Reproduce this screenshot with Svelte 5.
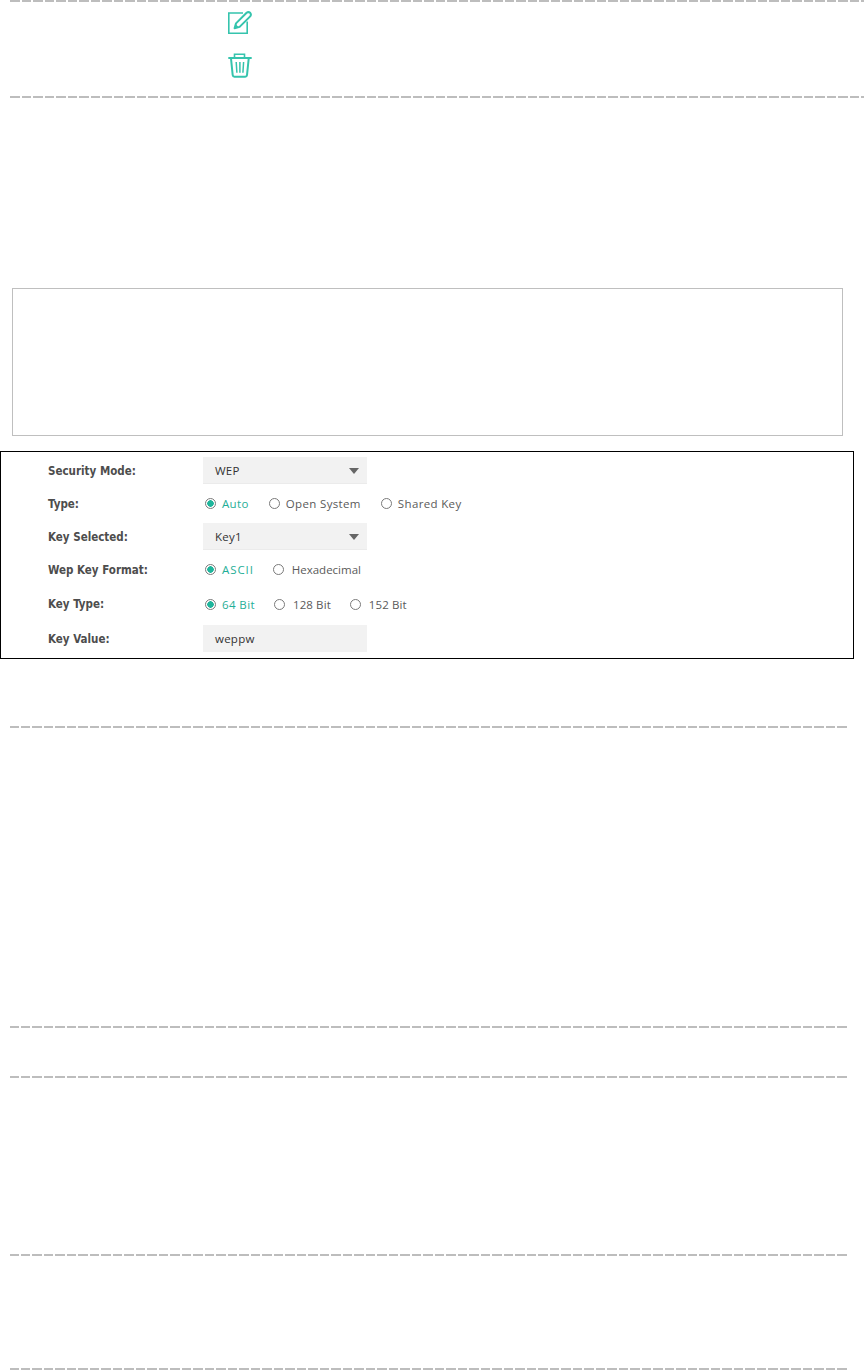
<script>
	const typeOptions = [
		{ label: 'Auto', checked: true },
		{ label: 'Open System' },
		{ label: 'Shared Key' }
	];
	const formatOptions = [{ label: 'ASCII', checked: true }, { label: 'Hexadecimal' }];
	const bitOptions = [{ label: '64 Bit', checked: true }, { label: '128 Bit' }, { label: '152 Bit' }];
</script>

{#snippet radios(options, gap, cls = '')}
	<div class="radios {cls}" style:gap="{gap}px">
		{#each options as opt}
			<span class="radio" class:on={opt.checked}><i></i>{opt.label}</span>
		{/each}
	</div>
{/snippet}

{#snippet select(value)}
	<div class="field select">{value}<b></b></div>
{/snippet}

<div class="page">
	<div class="rule wide first"></div>
	<div class="icons">
		<svg width="24" height="24" viewBox="0 0 24 24" fill="none" stroke="#35c4ad">
			<path d="M19.2 10.5V22.2H.8V2H15" stroke-width="1.6" />
			<path d="M6.6 17.2 8 12.4 18.6 1.8Q20.4 .4 22.2 1.8 23.6 3.6 22.2 5.4L11.6 15.9Z" stroke-width="2" stroke-linejoin="round" />
			<path d="M6.6 17.2 7.8 13.2 10.8 16.2Z" fill="#35c4ad" stroke="none" />
		</svg>
		<svg width="24" height="25" viewBox="0 0 24 25" fill="none" stroke="#35c4ad" stroke-width="2">
			<path d="M0.3 5H23.7" />
			<path d="M6.5 4.5V1.2H16.5V4.5" stroke-width="1.6" />
			<path d="M3 5.5 4.7 22.2Q4.9 23.8 6.4 23.8H17.2Q18.8 23.8 19 22.2L20.7 5.5" />
			<path d="M8.2 9 8.9 19.8M11.9 9V19.8M15.6 9 14.9 19.8" stroke-width="1.5" />
		</svg>
	</div>
	<div class="rule wide second"></div>

	<div class="note"></div>

	<div class="panel">
		<div class="row">
			<span class="label">Security Mode:</span>
			{@render select('WEP')}
		</div>
		<div class="row tall">
			<span class="label">Type:</span>
			{@render radios(typeOptions, 20)}
		</div>
		<div class="row">
			<span class="label">Key Selected:</span>
			{@render select('Key1')}
		</div>
		<div class="row tall">
			<span class="label">Wep Key Format:</span>
			{@render radios(formatOptions, 19, 'format')}
		</div>
		<div class="row mid">
			<span class="label">Key Type:</span>
			{@render radios(bitOptions, 19, 'bits')}
		</div>
		<div class="row">
			<span class="label">Key Value:</span>
			<div class="field">weppw</div>
		</div>
	</div>

	<div class="rule r1"></div>
	<div class="rule r2"></div>
	<div class="rule r3"></div>
	<div class="rule r4"></div>
	<div class="rule r5"></div>
</div>

<style>
	:global(body) {
		background: #fff;
	}

	.page {
		width: 864px;
		height: 1370px;
		overflow: hidden;
		font-family: 'Open Sans', 'DejaVu Sans', sans-serif;
		font-size: 11px;
		color: #4d4d4d;
	}

	.rule {
		height: 2px;
		margin-left: 10px;
		width: 837px;
		/* dash widths alternate 10 / 9 with a 2px gap */
		background: linear-gradient(
			90deg,
			#bdbdbd 0,
			#bdbdbd 10px,
			transparent 10px,
			transparent 12px,
			#bdbdbd 12px,
			#bdbdbd 21px,
			transparent 21px
		) 22px 0 / 23px 2px repeat-x;
	}

	.rule.wide {
		width: 854px;
		background-position: 0 0;
	}

	.icons {
		display: flex;
		flex-direction: column;
		gap: 18px;
		padding: 9px 0 0 228px;
		height: 85px;
		box-sizing: border-box;
	}

	.icons svg {
		display: block;
	}

	.rule.second {
		margin-top: 9px;
	}

	.note {
		box-sizing: border-box;
		margin: 190px 0 0 12px;
		width: 831px;
		height: 148px;
		border: 1px solid #bfbfbf;
	}

	.panel {
		box-sizing: border-box;
		margin-top: 15px;
		width: 854px;
		height: 208px;
		border: 1px solid #000;
		padding: 5px 0 0 47px;
	}

	.row {
		display: flex;
		align-items: center;
		height: 27px;
	}

	.row.tall {
		height: 39px;
	}

	.row.mid {
		height: 30px;
		margin-bottom: 6px;
	}

	.label {
		width: 155px;
		font-family: 'DejaVu Sans', sans-serif;
		font-stretch: condensed;
		font-weight: 700;
		font-size: 11.5px;
		color: #4d4d4d;
	}

	.field {
		box-sizing: border-box;
		width: 164px;
		height: 27px;
		padding-left: 12px;
		line-height: 27px;
		background: #f2f2f2;
		position: relative;
		font-family: 'Open Sans', sans-serif;
		font-size: 11.5px;
		letter-spacing: 0.25px;
		color: #333;
	}

	.select {
		border-bottom: 1px solid #ebebeb;
	}

	.select b {
		position: absolute;
		right: 8px;
		top: 11px;
		border-left: 5px solid transparent;
		border-right: 5px solid transparent;
		border-top: 6px solid #666;
	}

	.radios {
		display: flex;
		align-items: center;
		padding-left: 2px;
	}

	.radio {
		display: flex;
		align-items: center;
		gap: 6px;
		font-size: 11.5px;
		letter-spacing: 0.35px;
		color: #5a5a5a;
	}

	.format .radio,
	.bits .radio {
		gap: 8px;
		letter-spacing: 0.1px;
	}

	.format .radio {
		letter-spacing: 0;
	}

	.format .radio.on {
		gap: 6px;
		letter-spacing: 0.9px;
	}

	.bits .radio.on {
		gap: 6px;
		letter-spacing: 0.4px;
	}

	.radio i {
		box-sizing: border-box;
		display: block;
		width: 11px;
		height: 11px;
		border: 1px solid #7a7a7a;
		border-radius: 50%;
		background: #fff;
	}

	.radio.on {
		color: #1fae97;
	}

	.radio.on i {
		background: radial-gradient(circle, #1fb59c 0 3px, #fff 3.5px);
	}

	.r1 {
		margin-top: 67px;
	}

	.r2 {
		margin-top: 298px;
	}

	.r3 {
		margin-top: 48px;
	}

	.r4 {
		margin-top: 176px;
	}

	.r5 {
		margin-top: 112px;
	}
</style>
